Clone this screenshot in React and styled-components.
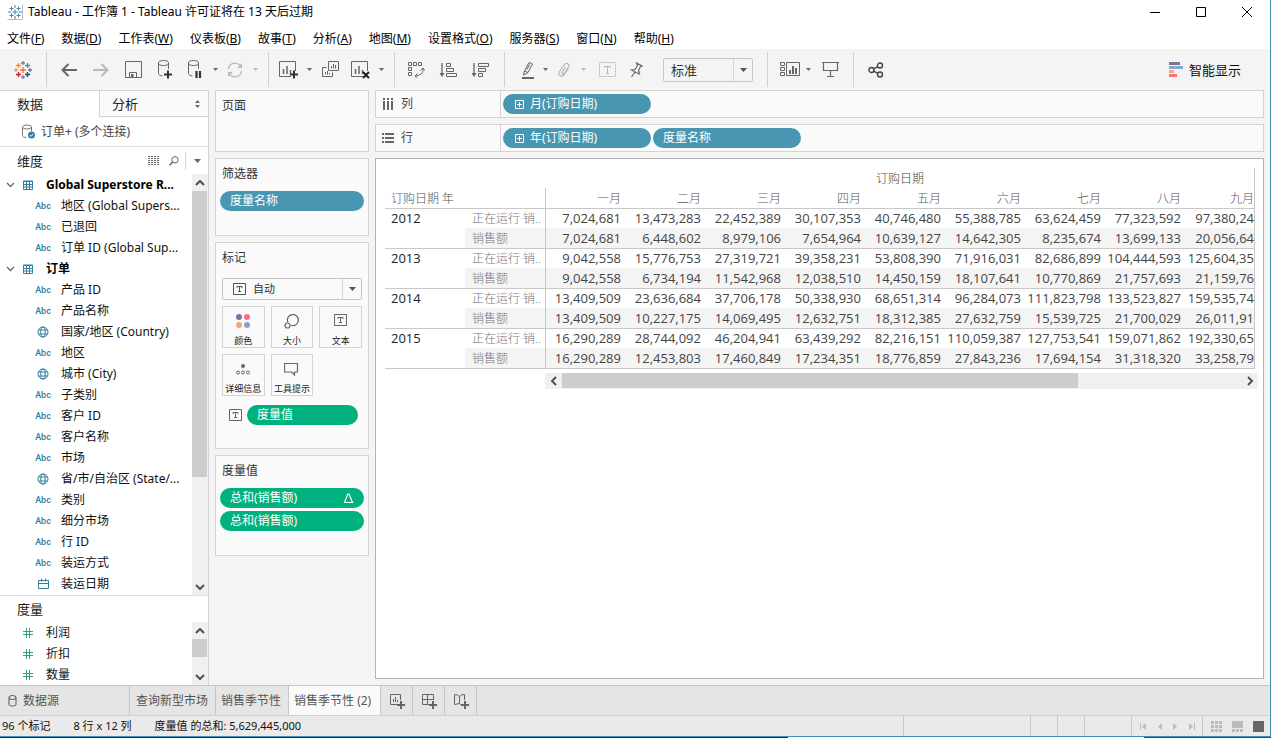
import React from "react";
import styled, { createGlobalStyle } from "styled-components";

const GlobalStyle = createGlobalStyle`
  *, *::before, *::after { box-sizing: border-box; }
  body {
    margin: 0;
    font: 12px/16px "Noto Sans", "Noto Sans CJK SC", sans-serif;
    color: #222;
    background: #fff;
  }
  button, select { font: inherit; color: inherit; }
  button { border: 0; padding: 0; background: none; }
  svg { display: block; flex: none; }
  h2, h3 { margin: 0; font-weight: 400; }
  ul { margin: 0; padding: 0; list-style: none; }
`;

/* ---------- window frame ---------- */
const Window = styled.div`
  display: flex;
  flex-direction: column;
  min-height: 100vh;
`;
const Frame = styled.div`
  flex: 1;
  display: flex;
  flex-direction: column;
  border-right: 1px solid #4190b6;
  border-bottom: 1px solid #4190b6;
`;
const DesktopEdge = styled.div`
  height: 1px;
  background: linear-gradient(90deg, #14304a 62%, #fff 62%, #fff 90%, #444 90%);
`;
const TitleBar = styled.header`
  display: flex;
  align-items: center;
  height: 24px;
  padding-left: 7px;
  gap: 5px;
  color: #000;
`;
const Controls = styled.div`
  display: flex;
  margin-left: auto;
`;
const WindowButton = styled.button`
  display: grid;
  place-items: center;
  width: 46px;
  height: 24px;
`;
const MenuBar = styled.nav`
  display: flex;
  align-items: center;
  height: 25px;
  padding-top: 5px;
  color: #000;
`;
const MenuButton = styled.button`
  padding: 0 10px 0 7px;
  white-space: nowrap;
`;

/* ---------- toolbar ---------- */
const Toolbar = styled.div`
  display: flex;
  align-items: center;
  height: 41px;
  padding-right: 29px;
  background: #f4f4f4;
`;
const ToolGroup = styled.div`
  display: flex;
  align-items: center;
  height: 35px;
  padding: 0 ${(p) => p.$end || 0}px 0 ${(p) => p.$start || 0}px;
  border-right: ${(p) => (p.$last ? "0" : "1px solid #d0d0d0")};
`;
const ToolButton = styled.button`
  display: grid;
  place-items: center;
  width: ${(p) => p.$w || 32}px;
  height: 30px;
  color: ${(p) => (p.$off ? "#b8b8b8" : "#666")};
`;
const SelectBox = styled.label`
  display: flex;
  align-items: center;
  position: relative;
  height: ${(p) => p.$h}px;
  width: ${(p) => p.$w};
  margin-left: ${(p) => p.$ml || 0}px;
  border: 1px solid #c6c6c6;
  border-radius: 2px;
  color: #555;
  background: ${(p) => p.$bg};
  padding-left: ${(p) => p.$pl}px;
  gap: 7px;
`;
const Select = styled.select`
  flex: 1;
  min-width: 0;
  height: 100%;
  border: 0;
  padding: 0;
  background: none;
  appearance: none;
  color: #333;
  font-size: ${(p) => p.$size}px;
`;
const SelectArrow = styled.span`
  display: grid;
  place-items: center;
  width: 19px;
  height: 100%;
  border-left: 1px solid #d4d4d4;
  pointer-events: none;
`;
const ShowMe = styled.button`
  display: flex;
  align-items: center;
  gap: 6px;
  margin-left: auto;
  font-size: 13px;
  color: #111;
  white-space: nowrap;
`;

/* ---------- data pane ---------- */
const Main = styled.main`
  flex: 1;
  display: flex;
  gap: 6px;
  padding-right: 6px;
  background: #f4f4f4;
`;
const DataPane = styled.aside`
  display: flex;
  flex-direction: column;
  flex: none;
  width: 209px;
  border-right: 1px solid #d4d4d4;
  background: #fff;
`;
const PaneTabs = styled.div`
  display: flex;
  height: 27px;
  border-top: 1px solid #d4d4d4;
  font-size: 13px;
`;
const PaneTab = styled.button`
  display: flex;
  align-items: center;
  justify-content: space-between;
  flex: ${(p) => (p.$active ? "none" : "1")};
  width: 99px;
  padding: 0 8px 0 ${(p) => (p.$active ? 17 : 12)}px;
  background: ${(p) => (p.$active ? "#fff" : "#fafafa")};
  border-left: ${(p) => (p.$active ? "0" : "1px solid #d4d4d4")};
  border-bottom: ${(p) => (p.$active ? "0" : "1px solid #d4d4d4")};
`;
const SourceRow = styled.button`
  display: flex;
  align-items: center;
  gap: 6px;
  height: 30px;
  padding-left: 21px;
  color: #444;
  border-bottom: 1px solid #e0e0e0;
`;
const SectionHead = styled.div`
  display: flex;
  align-items: center;
  height: 27px;
  padding-left: 17px;
  font-size: 13px;
  border-top: ${(p) => (p.$ruled ? "1px solid #e0e0e0" : "0")};
`;
const SectionTitle = styled.h2`
  flex: 1;
  font-size: 13px;
`;
const HeadButton = styled.button`
  display: grid;
  place-items: center;
  width: ${(p) => p.$w}px;
  height: 18px;
  color: #666;
  border-left: ${(p) => (p.$ruled ? "1px solid #d4d4d4" : "0")};
`;
const ListBox = styled.div`
  display: flex;
  flex: ${(p) => (p.$grow ? "1" : "none")};
`;
const FieldList = styled.ul`
  flex: 1;
  min-width: 0;
`;
const Field = styled.li`
  display: flex;
  align-items: center;
  height: 21px;
  padding-left: ${(p) => (p.$nested ? 33 : 20)}px;
  gap: ${(p) => (p.$nested ? 8 : 10)}px;
  color: #111;
  white-space: nowrap;
`;
const TableField = styled.li`
  display: flex;
  align-items: center;
  height: 21px;
  padding-left: 6px;
  color: #000;
  font-weight: 700;
  white-space: nowrap;
`;
const TableGlyph = styled.span`
  width: 23px;
  margin-left: 8px;
`;
const TypeIcon = styled.span`
  display: grid;
  place-items: center;
  width: ${(p) => (p.$measure ? 16 : 20)}px;
  font: 500 9px/12px Roboto, sans-serif;
  color: ${(p) => (p.$measure ? "#2fa27b" : "#32809f")};
`;

/* ---------- scroll bars ---------- */
const ScrollTrack = styled.div`
  display: flex;
  flex: none;
  flex-direction: ${(p) => (p.$horizontal ? "row" : "column")};
  ${(p) => (p.$horizontal ? "height: 16px;" : "width: 16px;")}
  background: #f0f0f0;
`;
const ScrollButton = styled.button`
  display: grid;
  place-items: center;
  flex: none;
  width: ${(p) => (p.$horizontal ? 17 : 15)}px;
  height: ${(p) => (p.$horizontal ? 15 : 17)}px;
`;
const ScrollLane = styled.div`
  flex: 1;
`;
const ScrollThumb = styled.div`
  background: #cdcdcd;
  ${(p) => (p.$horizontal
    ? `height: 15px; width: ${p.$size}%;`
    : `width: 15px; height: ${p.$size}%;`)}
`;

/* ---------- shelf cards ---------- */
const CardColumn = styled.div`
  display: flex;
  flex-direction: column;
  flex: none;
  gap: 6px;
  width: 154px;
`;
const Card = styled.section`
  min-height: ${(p) => p.$min}px;
  padding: 0 4px;
  border: 1px solid #d4d4d4;
  background: #fafafa;
`;
const CardTitle = styled.h3`
  height: 32px;
  padding: 7px 2px 0;
  font-size: 12px;
  line-height: 16px;
  color: #333;
`;
const Pill = styled.button`
  display: flex;
  align-items: center;
  gap: 6px;
  width: ${(p) => p.$w || "100%"};
  height: 20px;
  padding: 0 ${(p) => (p.$icon ? 12 : 10)}px;
  border-radius: 10px;
  background: ${(p) => (p.$green ? "#00b180" : "#4996b2")};
  color: #fff;
  white-space: nowrap;
`;
const PillMark = styled.span`
  margin-left: auto;
`;
const PillStack = styled.div`
  display: flex;
  flex-direction: column;
  gap: 3px;
`;
const MarksBody = styled.div`
  display: flex;
  flex-direction: column;
  gap: 6px;
  padding: 3px 2px 9px;
`;
const MarkGrid = styled.div`
  display: grid;
  grid-template-columns: repeat(3, 1fr);
  gap: 6px;
`;
const MarkButton = styled.button`
  display: flex;
  flex-direction: column;
  align-items: center;
  justify-content: space-between;
  height: 42px;
  padding: 7px 0 0;
  border: 1px solid #d4d4d4;
  color: #666;
`;
const MarkLabel = styled.span`
  font-size: 9px;
  line-height: 12px;
  color: #222;
  white-space: nowrap;
`;
const MarkPillRow = styled.div`
  display: flex;
  align-items: center;
  gap: 5px;
  padding: 0 6px 0 9px;
  color: #666;
`;

/* ---------- work area ---------- */
const WorkArea = styled.div`
  flex: 1;
  min-width: 0;
  display: flex;
  flex-direction: column;
  gap: 6px;
  padding-bottom: 6px;
`;
const Shelf = styled.section`
  display: flex;
  height: 28px;
  border: 1px solid #d4d4d4;
  background: #fafafa;
`;
const ShelfName = styled.h3`
  display: flex;
  align-items: center;
  gap: 7px;
  width: 125px;
  padding-left: 6px;
  border-right: 1px solid #d4d4d4;
  font-size: 12px;
  color: #444;
`;
const ShelfPills = styled.div`
  display: flex;
  align-items: center;
  gap: 2px;
  padding-left: 2px;
`;
const View = styled.section`
  flex: 1;
  padding: 9px 5px 0 9px;
  border: 1px solid #b4b4b4;
  background: #fff;
`;
const CrossTab = styled.table`
  width: calc(100% - 3px);
  table-layout: fixed;
  border-collapse: separate;
  border-spacing: 0;
  border-right: 1px solid #c8c8c8;
  border-bottom: 1px solid #c8c8c8;
  font-family: "Open Sans", "Noto Sans CJK SC", sans-serif;
`;
const Col = styled.col`
  width: ${(p) => p.$w};
`;
const Cell = styled.td`
  height: 20px;
  padding: 0 ${(p) => (p.$edge ? 0 : 5)}px 0 0;
  border-top: ${(p) => (p.$rule ? "1px solid #c8c8c8" : "0")};
  background: ${(p) => (p.$band ? "#f4f4f4" : "transparent")};
  font-size: 13px;
  line-height: 19px;
  text-align: right;
  color: #444;
  white-space: nowrap;
`;
const HeadCell = styled(Cell)`
  font-size: 12px;
  font-weight: 300;
  color: ${(p) => (p.$dark ? "#444" : "#555")};
  text-align: ${(p) => p.$align || "right"};
  padding-left: ${(p) => (p.$align === "left" ? 6 : 0)}px;
  border-right: ${(p) => (p.$divide ? "1px solid #c8c8c8" : "0")};
`;
const YearCell = styled(Cell)`
  padding-left: 6px;
  text-align: left;
  vertical-align: top;
  font-weight: 400;
  color: #222;
`;
const MeasureCell = styled(Cell)`
  padding: 0 0 0 7px;
  border-right: 1px solid #c8c8c8;
  text-align: left;
  font-size: 12px;
  font-weight: 300;
  color: #777;
`;
const ViewScroll = styled.div`
  padding: 4px 0 0 160px;
`;

/* ---------- sheet tabs and status ---------- */
const SheetTabs = styled.nav`
  display: flex;
  height: 30px;
  border-top: 1px solid #c6c6c6;
  background: #e5e5e5;
`;
const SheetTab = styled.button`
  display: flex;
  align-items: center;
  gap: 6px;
  min-width: ${(p) => p.$min || 0}px;
  padding: 0 ${(p) => p.$pr || 6}px 0 ${(p) => p.$pl || 5}px;
  border-right: 1px solid #c6c6c6;
  background: ${(p) => (p.$active ? "#fafafa" : "transparent")};
  color: #555;
  white-space: nowrap;
`;
const NewTab = styled.button`
  display: grid;
  place-items: center;
  width: 32px;
  border-right: 1px solid #c6c6c6;
  color: #666;
`;
const StatusBar = styled.footer`
  display: flex;
  height: 21px;
  border-top: 1px solid #d0d0d0;
  background: #eaeaea;
  font-size: 11px;
  line-height: 20px;
  color: #111;
`;
const StatusText = styled.div`
  display: flex;
  gap: 23px;
  flex: 1;
  padding-left: 2px;
  white-space: nowrap;
`;
const StatusCell = styled.div`
  display: flex;
  align-items: center;
  gap: ${(p) => p.$gap || 0}px;
  width: ${(p) => p.$w}px;
  padding-left: ${(p) => (p.$gap ? 8 : 0)}px;
  border-left: 1px solid #c8c8c8;
`;
const StatusButton = styled.button`
  display: grid;
  place-items: center;
  color: ${(p) => (p.$on ? "#666" : "#bbb")};
`;

/* ---------- drawings ---------- */
const Svg = ({ w = 18, h = w, children, ...rest }) => (
  <svg width={w} height={h} viewBox={`0 0 ${w} ${h}`} fill="none" stroke="currentColor" aria-hidden="true" {...rest}>
    {children}
  </svg>
);
const Caret = () => (
  <Svg w={7} h={4}><path d="M0 0h7L3.500 4z" fill="currentColor" stroke="none" /></Svg>
);
const SmallCaret = () => (
  <Svg w={5} h={3}><path d="M0 0h5L2.500 3z" fill="currentColor" stroke="none" /></Svg>
);
const logoMarks = [
  [9, 9, 3, "#e8762d"], [9, 2, 2, "#5b8fa8"], [9, 16, 2, "#7b7fb0"],
  [2, 9, 2, "#e6a06f"], [16, 9, 2, "#6d7aa8"], [4.5, 4.5, 2.5, "#eb912c"],
  [13.5, 4.5, 2.5, "#59879b"], [4.5, 13.5, 2.5, "#c72037"], [13.5, 13.5, 2.5, "#1f447e"],
];
const Logo = ({ mono }) => (
  <Svg w={18}>
    {logoMarks.map(([x, y, r, c]) => (
      <path key={`${x}-${y}`} d={`M${x - r} ${y}h${r * 2}M${x} ${y - r}v${r * 2}`} stroke={mono || c} strokeWidth="1.3" />
    ))}
  </Svg>
);
const AppIcon = () => (
  <Svg w={16}>
    <path d="M0 0h16v16H0z" fill="#fff" stroke="none" />
    <path d="M.5 15.500h15V.5" stroke="#bbb" />
    <path d="M8 1v3M8 12v3M1 8h3M12 8h3M5.500 8h5M8 5.500v5M2.500 4.500h4M4.500 2.500v4M9.500 4.500h4M11.500 2.500v4M2.500 11.500h4M4.500 9.500v4M9.500 11.500h4M11.500 9.500v4" stroke="#3d86b0" />
  </Svg>
);
const BackArrow = () => (
  <Svg w={16} h={14}><path d="M16 7H1.500M7.500 1L1.500 7l6 6" strokeWidth="2" /></Svg>
);
const ForwardArrow = () => (
  <Svg w={16} h={14}><path d="M0 7h14.500M8.500 1l6 6-6 6" strokeWidth="2" /></Svg>
);
const SaveIcon = () => (
  <Svg w={17} h={17}><path d="M.5.500h16v16H.5zM4.500 16v-4.500h7V16" /><path d="M6 13h2.500v3H6z" fill="currentColor" stroke="none" /></Svg>
);
const DataIcon = ({ pause }) => (
  <Svg w={16} h={19}>
    <ellipse cx="6.500" cy="3" rx="5" ry="2.500" />
    <path d="M1.500 3v10.500c0 1.400 1.800 2.300 4 2.500M11.500 3v6" />
    {pause ? <path d="M9.500 11v7M13 11v7" stroke="#333" strokeWidth="2.200" /> : <path d="M7 14.500h8M11 10.500v8" stroke="#333" strokeWidth="2" />}
  </Svg>
);
const RefreshIcon = () => (
  <Svg w={18} h={16} strokeWidth="1.300">
    <path d="M2.500 7A6.500 6.500 0 0 1 14 3.500M15.500 9A6.500 6.500 0 0 1 4 12.500" />
    <path d="M16 1v5h-4.500zM2 15v-5h4.500z" fill="currentColor" stroke="none" />
  </Svg>
);
const SheetIcon = ({ clear }) => (
  <Svg w={20} h={19}>
    <path d="M12 16.500H.5V1.500h16V11" /><path d="M4.500 9v5M8 6v8M11.500 10v4" strokeWidth="1.500" />
    {clear ? <path d="M12 12l6 6M18 12l-6 6" stroke="#222" strokeWidth="2" /> : <path d="M11 14.500h8M15 10.500v8" stroke="#333" strokeWidth="2" />}
  </Svg>
);
const DuplicateIcon = () => (
  <Svg w={18} h={17}>
    <path d="M6.500.500h10v9h-10zM4.500 6.500h-4v9h10v-4M9.500 5v2.500M11.500 3v4.500M13.500 4v3.500M3.500 11v2.500M5.500 10v3.500M7.500 12v1.500" />
  </Svg>
);
const SwapIcon = () => (
  <Svg w={18} h={17}>
    <path d="M1.500 1.500h3v3h-3zM6.500 1.500h3v3h-3zM11.500 1.500h3v3h-3zM1.500 6.500h3v3h-3zM1.500 11.500h3v3h-3z" />
    <path d="M16 8c.5 4-2.500 6.500-8 7M10.500 12.500L8 15l2.500 2M13.500 9.500L16 7l2 2.500" />
  </Svg>
);
const SortIcon = ({ desc }) => (
  <Svg w={18} h={16}>
    <path d="M3 1v12" strokeWidth="1.300" /><path d="M.5 11h5L3 15z" fill="currentColor" stroke="none" />
    {desc ? <path d="M7.500 1.500h10v3h-10zM7.500 6.500h7v3h-7zM7.500 11.500h4v3h-4z" /> : <path d="M7.500 1.500h4v3h-4zM7.500 6.500h7v3h-7zM7.500 11.500h10v3h-10z" />}
  </Svg>
);
const PenIcon = () => (
  <Svg w={13} h={18}>
    <path d="M8 1.500l3.500 1.500-4.500 8.500-3.500-1.500zM3.500 10L2.500 14 7 11.500M6 8.500l2.500-5" />
    <path d="M1 17h12" strokeWidth="2" />
  </Svg>
);
const ClipIcon = () => (
  <Svg w={14} h={16}>
    <path d="M8.500 5L5 10.500c-.8 1.500 1 2.500 2 1L11.500 5c1.500-3-2-5-4-2.500L2.500 9.500c-2 3 1.500 6.500 4 4l5-7" strokeWidth="1.200" />
  </Svg>
);
const TextFrame = () => (
  <Svg w={17} h={15}><path d="M.5.500h16v14H.5z" strokeDasharray="2 1" /><path d="M5.500 6V4.500h6V6M8.500 4.500v7M7 11.500h3" /></Svg>
);
const PinIcon = () => (
  <Svg w={13} h={16}>
    <path d="M6.500 1l5.500 3-1.500.5-2 4L9.500 12 6 10.500 1.500 8l3.500-.5 2.500-4zM5 10l-3.500 5" strokeWidth="1.200" />
  </Svg>
);
const CardsIcon = () => (
  <Svg w={20} h={15}>
    <path d="M.5.500h4v3h-4zM.5 5.500h4v3h-4zM.5 10.500h4v3h-4zM6.500.500h13v13h-13z" /><path d="M10 8v4M13 4v8M16 6v6" strokeWidth="2" />
  </Svg>
);
const PresentIcon = () => (
  <Svg w={17} h={17}><path d="M0 1.500h17M1.500 1.500v8h14v-8M8.500 9.500v6M5 15.500h7" strokeWidth="1.200" /></Svg>
);
const ShareIcon = () => (
  <Svg w={16} h={16} strokeWidth="1.400" stroke="#444">
    <circle cx="3.500" cy="8" r="2.500" /><circle cx="12" cy="3.500" r="2.500" /><circle cx="12" cy="12.500" r="2.500" />
    <path d="M5.700 6.800l4-2.100M5.700 9.200l4 2.100" />
  </Svg>
);
const ShowMeIcon = () => (
  <Svg w={14} h={15} stroke="none">
    <path d="M0 0h11v3H0z" fill="#866f95" /><path d="M0 4h14v3H0z" fill="#83a8d0" />
    <path d="M0 8h5v3H0z" fill="#f6a77c" /><path d="M0 12h8v3H0z" fill="#fb6f80" />
  </Svg>
);
const TextIcon = () => (
  <Svg w={13} h={12}><path d="M.5.500h12v11H.5z" /><path d="M4 5V3.500h5V5M6.500 3.500v5M5 8.500h3" /></Svg>
);
const ColorIcon = () => (
  <Svg w={14} h={14} stroke="none">
    <circle cx="3" cy="3" r="3" fill="#82709a" /><circle cx="11" cy="3" r="3" fill="#fc6d80" />
    <circle cx="3" cy="11" r="3" fill="#f3a87c" /><circle cx="11" cy="11" r="3" fill="#80a5cc" />
  </Svg>
);
const SizeIcon = () => (
  <Svg w={15} h={15}><path d="M4 8.500A5.500 5.500 0 1 1 7 11.200" strokeWidth="1.200" /><circle cx="3.500" cy="11.500" r="2.500" strokeWidth="1.200" /></Svg>
);
const DetailIcon = () => (
  <Svg w={14} h={14}>
    <circle cx="7" cy="4" r="2" fill="currentColor" stroke="none" />
    <circle cx="2" cy="10.500" r="1.500" /><circle cx="7" cy="10.500" r="1.500" /><circle cx="12" cy="10.500" r="1.500" />
  </Svg>
);
const TooltipIcon = () => (
  <Svg w={15} h={14}><path d="M.5 1.500h13v8.500h-3v3L7.500 10H.5z" strokeWidth="1.200" /></Svg>
);
const DeltaIcon = () => (
  <Svg w={11} h={12}><path d="M5 1.500L1.500 10.500h8L5.800 1.500" strokeWidth="1.200" /></Svg>
);
const PlusBox = () => (
  <Svg w={9} h={9}><path d="M.5.500h8v8h-8zM2 4.500h5M4.500 2v5" /></Svg>
);
const ColumnsIcon = () => (
  <Svg w={12} h={12}><path d="M2 0v2M6 0v2M10 0v2M2 3v9M6 3v9M10 3v9" stroke="#666" strokeWidth="2" /></Svg>
);
const RowsIcon = () => (
  <Svg w={12} h={12}><path d="M0 2h2M0 6h2M0 10h2M3 2h9M3 6h9M3 10h9" stroke="#666" strokeWidth="2" /></Svg>
);
const SourceIcon = () => (
  <Svg w={14} h={15} stroke="#777">
    <ellipse cx="6" cy="3" rx="4.500" ry="2" /><path d="M1.500 3v8.500c0 1 1.500 2 4 2M10.500 3v4" />
    <circle cx="10.500" cy="11" r="3.500" fill="#2f7fa3" stroke="none" /><path d="M8.700 11l1.400 1.400 2.300-2.600" stroke="#fff" />
  </Svg>
);
const ListIcon = () => (
  <Svg w={12} h={9}><path d="M0 .5h12M0 2.500h12M0 4.500h12M0 6.500h12M0 8.500h12" strokeDasharray="2 1" /></Svg>
);
const SearchIcon = () => (
  <Svg w={10} h={10}><circle cx="6" cy="3.800" r="3.200" /><path d="M3.700 6L.5 9.300" strokeWidth="1.400" /></Svg>
);
const SorterIcon = () => (
  <Svg w={5} h={8} stroke="none" fill="#666"><path d="M0 3h5L2.500 0zM0 5h5L2.500 8z" /></Svg>
);
const Chevron = () => <Svg w={9} h={6}><path d="M1 1l3.500 3.500L8 1" stroke="#666" strokeWidth="1.300" /></Svg>;
const TableIcon = () => (
  <Svg w={10} h={10} stroke="#32809f"><path d="M.5 1h9v8.500h-9zM3.500 1v8M6.500 1v8M0 4.500h10M0 7h10M0 1.500h10" /></Svg>
);
const GlobeIcon = () => (
  <Svg w={12} h={12}><circle cx="6" cy="6" r="5" /><ellipse cx="6" cy="6" rx="2.200" ry="5" /><path d="M1.500 4h9M1.500 8h9" /></Svg>
);
const DateIcon = () => (
  <Svg w={11} h={11}><path d="M.5 2.500h10v8H.5zM.5 5.500h10M3.500.500v3M7.500.500v3" /></Svg>
);
const HashIcon = () => (
  <Svg w={10} h={10}><path d="M3.500 0v10M6.500 0v10M0 3.500h10M0 6.500h10" /></Svg>
);
const arrowPaths = {
  up: "M1 7l4-4 4 4", down: "M1 3l4 4 4-4", left: "M7 1L3 5l4 4", right: "M3 1l4 4-4 4",
};
const ArrowIcon = ({ dir }) => (
  <Svg w={10} h={10}><path d={arrowPaths[dir]} stroke="#505050" strokeWidth="2" /></Svg>
);
const CylinderIcon = () => (
  <Svg w={9} h={12}><ellipse cx="4.500" cy="2.500" rx="3.500" ry="2" /><path d="M1 2.500v7c0 2 7 2 7 0v-7" /></Svg>
);
const NewSheetIcon = () => (
  <Svg w={16} h={16}><path d="M8 11.500H1.500v-10h10V7M4.500 6v3M6.500 4v5M8.500 7v2" /><path d="M8 12h8M12 8v8" strokeWidth="2" /></Svg>
);
const NewBoardIcon = () => (
  <Svg w={16} h={16}><path d="M8 11.500H1.500v-10h11V7M6.500 1.500v10M1.500 6.500h11" /><path d="M8 12h8M12 8v8" strokeWidth="2" /></Svg>
);
const NewStoryIcon = () => (
  <Svg w={16} h={16}><path d="M8 12L6.500 10.500l-5 1v-10l3 .5 2 1.500 2-1.500 3-.5V7M6.500 3.500v7" /><path d="M8 12h8M12 8v8" strokeWidth="2" /></Svg>
);

/* ---------- data ---------- */
const menus = [["文件", "F"], ["数据", "D"], ["工作表", "W"], ["仪表板", "B"], ["故事", "T"], ["分析", "A"],
  ["地图", "M"], ["设置格式", "O"], ["服务器", "S"], ["窗口", "N"], ["帮助", "H"]];
const dimensions = [
  ["table", "Global Superstore R..."], ["abc", "地区 (Global Supers..."], ["abc", "已退回"], ["abc", "订单 ID (Global Sup..."],
  ["table", "订单"], ["abc", "产品 ID"], ["abc", "产品名称"], ["geo", "国家/地区 (Country)"], ["abc", "地区"],
  ["geo", "城市 (City)"], ["abc", "子类别"], ["abc", "客户 ID"], ["abc", "客户名称"], ["abc", "市场"],
  ["geo", "省/市/自治区 (State/..."], ["abc", "类别"], ["abc", "细分市场"], ["abc", "行 ID"], ["abc", "装运方式"], ["date", "装运日期"],
];
const glyphs = { abc: "Abc", geo: <GlobeIcon />, date: <DateIcon /> };
const months = ["一月", "二月", "三月", "四月", "五月", "六月", "七月", "八月", "九月"];
const years = [
  ["2012",
    ["7,024,681", "13,473,283", "22,452,389", "30,107,353", "40,746,480", "55,388,785", "63,624,459", "77,323,592", "97,380,24"],
    ["7,024,681", "6,448,602", "8,979,106", "7,654,964", "10,639,127", "14,642,305", "8,235,674", "13,699,133", "20,056,64"]],
  ["2013",
    ["9,042,558", "15,776,753", "27,319,721", "39,358,231", "53,808,390", "71,916,031", "82,686,899", "104,444,593", "125,604,35"],
    ["9,042,558", "6,734,194", "11,542,968", "12,038,510", "14,450,159", "18,107,641", "10,770,869", "21,757,693", "21,159,76"]],
  ["2014",
    ["13,409,509", "23,636,684", "37,706,178", "50,338,930", "68,651,314", "96,284,073", "111,823,798", "133,523,827", "159,535,74"],
    ["13,409,509", "10,227,175", "14,069,495", "12,632,751", "18,312,385", "27,632,759", "15,539,725", "21,700,029", "26,011,91"]],
  ["2015",
    ["16,290,289", "28,744,092", "46,204,941", "63,439,292", "82,216,151", "110,059,387", "127,753,541", "159,071,862", "192,330,65"],
    ["16,290,289", "12,453,803", "17,460,849", "17,234,351", "18,776,859", "27,843,236", "17,694,154", "31,318,320", "33,258,79"]],
];

/* ---------- composed parts ---------- */
function ScrollBar({ horizontal, size }) {
  return (
    <ScrollTrack $horizontal={horizontal}>
      <ScrollButton $horizontal={horizontal} aria-label="向前滚动"><ArrowIcon dir={horizontal ? "left" : "up"} /></ScrollButton>
      <ScrollLane><ScrollThumb $horizontal={horizontal} $size={size} /></ScrollLane>
      <ScrollButton $horizontal={horizontal} aria-label="向后滚动"><ArrowIcon dir={horizontal ? "right" : "down"} /></ScrollButton>
    </ScrollTrack>
  );
}

function Tool({ label, w, off, children }) {
  return <ToolButton aria-label={label} $w={w} $off={off}>{children}</ToolButton>;
}
const DropTool = ({ off }) => <Tool label="更多选项" w={12} off={off}><SmallCaret /></Tool>;

function MainToolbar() {
  return (
    <Toolbar>
      <ToolGroup><Tool label="起始页" w={46}><Logo /></Tool></ToolGroup>
      <ToolGroup $start={6} $end={7}>
        <Tool label="撤消"><BackArrow /></Tool>
        <Tool label="重做" off><ForwardArrow /></Tool>
        <Tool label="保存"><SaveIcon /></Tool>
        <Tool label="新建数据源"><DataIcon /></Tool>
        <Tool label="暂停自动更新" w={28}><DataIcon pause /></Tool>
        <DropTool />
        <Tool label="运行更新" w={28} off><RefreshIcon /></Tool>
        <DropTool off />
      </ToolGroup>
      <ToolGroup $start={6} $end={7}>
        <Tool label="新建工作表" w={28}><SheetIcon /></Tool>
        <DropTool />
        <Tool label="复制"><DuplicateIcon /></Tool>
        <Tool label="清除工作表" w={28}><SheetIcon clear /></Tool>
        <DropTool />
      </ToolGroup>
      <ToolGroup $start={5} $end={8}>
        <Tool label="交换行和列"><SwapIcon /></Tool>
        <Tool label="升序排序"><SortIcon /></Tool>
        <Tool label="降序排序"><SortIcon desc /></Tool>
      </ToolGroup>
      <ToolGroup $start={10} $end={14}>
        <Tool label="突出显示" w={24}><PenIcon /></Tool>
        <DropTool />
        <Tool label="组成员" w={26} off><ClipIcon /></Tool>
        <DropTool off />
        <Tool label="显示标记标签" w={36} off><TextFrame /></Tool>
        <Tool label="固定轴" w={22}><PinIcon /></Tool>
        <SelectBox $w="90px" $h={24} $ml={16} $pl={7} $bg="#f4f4f4">
          <Select $size={13} aria-label="适合"><option>标准</option></Select>
          <SelectArrow><Caret /></SelectArrow>
        </SelectBox>
      </ToolGroup>
      <ToolGroup $start={10} $end={7}>
        <Tool label="显示/隐藏卡" w={24}><CardsIcon /></Tool>
        <DropTool />
        <Tool label="演示模式"><PresentIcon /></Tool>
      </ToolGroup>
      <ToolGroup $start={6} $last><Tool label="共享"><ShareIcon /></Tool></ToolGroup>
      <ShowMe><ShowMeIcon />智能显示</ShowMe>
    </Toolbar>
  );
}

function FieldsPane() {
  return (
    <DataPane>
      <PaneTabs>
        <PaneTab $active>数据</PaneTab>
        <PaneTab>分析<SorterIcon /></PaneTab>
      </PaneTabs>
      <SourceRow><SourceIcon />订单+ (多个连接)</SourceRow>
      <SectionHead>
        <SectionTitle>维度</SectionTitle>
        <HeadButton $w={18} aria-label="查看数据"><ListIcon /></HeadButton>
        <HeadButton $w={22} aria-label="查找字段"><SearchIcon /></HeadButton>
        <HeadButton $w={23} $ruled aria-label="菜单"><Caret /></HeadButton>
      </SectionHead>
      <ListBox $grow>
        <FieldList>
          {dimensions.map(([type, name]) => type === "table" ? (
            <TableField key={name}><Chevron /><TableGlyph><TableIcon /></TableGlyph>{name}</TableField>
          ) : (
            <Field key={name} $nested><TypeIcon>{glyphs[type]}</TypeIcon>{name}</Field>
          ))}
        </FieldList>
        <ScrollBar size={74} />
      </ListBox>
      <SectionHead $ruled><SectionTitle>度量</SectionTitle></SectionHead>
      <ListBox>
        <FieldList>
          {["利润", "折扣", "数量"].map((name) => (
            <Field key={name}><TypeIcon $measure><HashIcon /></TypeIcon>{name}</Field>
          ))}
        </FieldList>
        <ScrollBar size={62} />
      </ListBox>
    </DataPane>
  );
}

const marks = [["颜色", <ColorIcon />], ["大小", <SizeIcon />], ["文本", <TextIcon />], ["详细信息", <DetailIcon />], ["工具提示", <TooltipIcon />]];

function Cards() {
  return (
    <CardColumn>
      <Card $min={62}><CardTitle>页面</CardTitle></Card>
      <Card $min={78}>
        <CardTitle>筛选器</CardTitle>
        <Pill>度量名称</Pill>
      </Card>
      <Card $min={207}>
        <CardTitle>标记</CardTitle>
        <MarksBody>
          <SelectBox $w="100%" $h={22} $pl={10} $bg="#fafafa">
            <TextIcon />
            <Select $size={11} aria-label="标记类型"><option>自动</option></Select>
            <SelectArrow><Caret /></SelectArrow>
          </SelectBox>
          <MarkGrid>
            {marks.map(([name, icon]) => (
              <MarkButton key={name}>{icon}<MarkLabel>{name}</MarkLabel></MarkButton>
            ))}
          </MarkGrid>
        </MarksBody>
        <MarkPillRow><TextIcon /><Pill $green>度量值</Pill></MarkPillRow>
      </Card>
      <Card $min={101}>
        <CardTitle>度量值</CardTitle>
        <PillStack>
          <Pill $green>总和(销售额)<PillMark><DeltaIcon /></PillMark></Pill>
          <Pill $green>总和(销售额)</Pill>
        </PillStack>
      </Card>
    </CardColumn>
  );
}

function DataView() {
  const last = months.length - 1;
  return (
    <View>
      <CrossTab>
        <colgroup>
          <Col $w="80px" /><Col $w="81px" />
          {months.map((m, i) => <Col key={m} $w={i === last ? "auto" : "80px"} />)}
        </colgroup>
        <thead>
          <tr>
            <HeadCell as="td" colSpan={2} />
            <HeadCell as="th" scope="colgroup" colSpan={9} $align="center" $dark $edge>订购日期</HeadCell>
          </tr>
          <tr>
            <HeadCell as="th" colSpan={2} $align="left" $divide>订购日期 年</HeadCell>
            {months.map((m, i) => <HeadCell as="th" scope="col" key={m} $edge={i === last}>{m}</HeadCell>)}
          </tr>
        </thead>
        <tbody>
          {years.map(([year, running, sales]) => (
            <React.Fragment key={year}>
              <tr>
                <YearCell as="th" scope="rowgroup" rowSpan={2} $rule>{year}</YearCell>
                <MeasureCell as="th" scope="row" $rule>正在运行 销..</MeasureCell>
                {running.map((v, i) => <Cell key={i} $rule $edge={i === last}>{v}</Cell>)}
              </tr>
              <tr>
                <MeasureCell as="th" scope="row" $band>销售额</MeasureCell>
                {sales.map((v, i) => <Cell key={i} $band $edge={i === last}>{v}</Cell>)}
              </tr>
            </React.Fragment>
          ))}
        </tbody>
      </CrossTab>
      <ViewScroll><ScrollBar horizontal size={76} /></ViewScroll>
    </View>
  );
}

function Status() {
  return (
    <StatusBar>
      <StatusText><span>96 个标记</span><span>8 行 x 12 列</span><span>度量值 的总和: 5,629,445,000</span></StatusText>
      <StatusCell $w={127} /><StatusCell $w={27} /><StatusCell $w={27} /><StatusCell $w={47} />
      <StatusCell $w={71} $gap={11}>
        <StatusButton aria-label="第一个"><Svg w={7} h={7}><path d="M.5 0v7" /><path d="M6 0v7L2 3.500z" fill="currentColor" stroke="none" /></Svg></StatusButton>
        <StatusButton aria-label="上一个"><Svg w={4} h={7}><path d="M4 0v7L0 3.500z" fill="currentColor" stroke="none" /></Svg></StatusButton>
        <StatusButton aria-label="下一个"><Svg w={4} h={7}><path d="M0 0v7l4-3.500z" fill="currentColor" stroke="none" /></Svg></StatusButton>
        <StatusButton aria-label="最后一个"><Svg w={7} h={7}><path d="M6.500 0v7" /><path d="M1 0v7l4-3.500z" fill="currentColor" stroke="none" /></Svg></StatusButton>
      </StatusCell>
      <StatusCell $w={68} $gap={10}>
        <StatusButton aria-label="缩略图"><Svg w={11} h={11}><path d="M0 1.500h11M0 5.500h11M0 9.500h11" strokeWidth="3" strokeDasharray="3 1" /></Svg></StatusButton>
        <StatusButton aria-label="幻灯片"><Svg w={11} h={11}><path d="M0 3.500h11" strokeWidth="7" /><path d="M0 9.500h11" strokeWidth="3" strokeDasharray="3 1" /></Svg></StatusButton>
        <StatusButton aria-label="工作表" $on><Svg w={11} h={11}><path d="M0 0h11v11H0z" fill="currentColor" stroke="none" /></Svg></StatusButton>
      </StatusCell>
    </StatusBar>
  );
}

export default function App() {
  return (
    <Window>
      <GlobalStyle />
      <Frame>
        <TitleBar>
          <AppIcon />
          <span>Tableau - 工作簿 1 - Tableau 许可证将在 13 天后过期</span>
          <Controls>
            <WindowButton aria-label="最小化"><Svg w={10} h={10}><path d="M0 5.500h10" /></Svg></WindowButton>
            <WindowButton aria-label="最大化"><Svg w={10} h={10}><path d="M.5.500h9v9h-9z" /></Svg></WindowButton>
            <WindowButton aria-label="关闭"><Svg w={10} h={10}><path d="M0 0l10 10M10 0L0 10" /></Svg></WindowButton>
          </Controls>
        </TitleBar>
        <MenuBar>
          {menus.map(([name, key]) => <MenuButton key={key}>{name}(<u>{key}</u>)</MenuButton>)}
        </MenuBar>
        <MainToolbar />
        <Main>
          <FieldsPane />
          <Cards />
          <WorkArea>
            <Shelf>
              <ShelfName><ColumnsIcon />列</ShelfName>
              <ShelfPills><Pill $w="148px" $icon><PlusBox />月(订购日期)</Pill></ShelfPills>
            </Shelf>
            <Shelf>
              <ShelfName><RowsIcon />行</ShelfName>
              <ShelfPills>
                <Pill $w="148px" $icon><PlusBox />年(订购日期)</Pill>
                <Pill $w="148px">度量名称</Pill>
              </ShelfPills>
            </Shelf>
            <DataView />
          </WorkArea>
        </Main>
        <SheetTabs>
          <SheetTab $min={130} $pl={8}><CylinderIcon />数据源</SheetTab>
          <SheetTab $pl={6} $pr={7}>查询新型市场</SheetTab>
          <SheetTab $pr={7}>销售季节性</SheetTab>
          <SheetTab $active $pr={9}>销售季节性 (2)</SheetTab>
          <NewTab aria-label="新建工作表"><NewSheetIcon /></NewTab>
          <NewTab aria-label="新建仪表板"><NewBoardIcon /></NewTab>
          <NewTab aria-label="新建故事"><NewStoryIcon /></NewTab>
        </SheetTabs>
        <Status />
      </Frame>
      <DesktopEdge />
    </Window>
  );
}
